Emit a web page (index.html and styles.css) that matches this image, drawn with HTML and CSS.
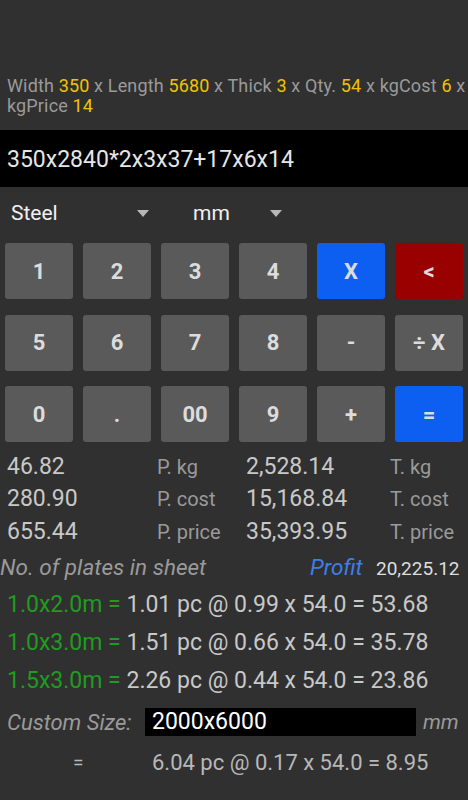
FILE: index.html
```html
<!DOCTYPE html>
<html lang="en">
<head>
    <meta charset="UTF-8">
    <meta name="viewport" content="width=device-width, initial-scale=1.0">
    <title>Plate Calculator</title>
    <link rel="stylesheet" href="styles.css">
</head>
<body>

    <div class="formula">
        Width <span class="val">350</span> x Length <span class="val">5680</span> x Thick <span class="val">3</span> x Qty. <span class="val">54</span> x kgCost <span class="val">6</span> x kgPrice <span class="val">14</span>
    </div>

    <div class="display">350x2840*2x3x37+17x6x14</div>

    <div class="spinners">
        <div class="spinner material">Steel <span class="arrow"></span></div>
        <div class="spinner unit">mm <span class="arrow"></span></div>
    </div>

    <div class="keypad">
        <button class="key">1</button>
        <button class="key">2</button>
        <button class="key">3</button>
        <button class="key">4</button>
        <button class="key blue">X</button>
        <button class="key red">&lt;</button>
        <button class="key">5</button>
        <button class="key">6</button>
        <button class="key">7</button>
        <button class="key">8</button>
        <button class="key">-</button>
        <button class="key">÷ X</button>
        <button class="key">0</button>
        <button class="key">.</button>
        <button class="key">00</button>
        <button class="key">9</button>
        <button class="key">+</button>
        <button class="key blue">=</button>
    </div>

    <div class="results">
        <span class="num">46.82</span><span class="lbl">P. kg</span><span class="num">2,528.14</span><span class="lbl">T. kg</span>
        <span class="num">280.90</span><span class="lbl">P. cost</span><span class="num">15,168.84</span><span class="lbl">T. cost</span>
        <span class="num">655.44</span><span class="lbl">P. price</span><span class="num">35,393.95</span><span class="lbl">T. price</span>
    </div>

    <div class="plates-head">
        <span class="title">No. of plates in sheet</span>
        <span class="profit">Profit</span>
        <span class="profit-val">20,225.12</span>
    </div>

    <div class="plate"><span class="size">1.0x2.0m =</span> 1.01 pc @ 0.99 x 54.0 = 53.68</div>
    <div class="plate"><span class="size">1.0x3.0m =</span> 1.51 pc @ 0.66 x 54.0 = 35.78</div>
    <div class="plate"><span class="size">1.5x3.0m =</span> 2.26 pc @ 0.44 x 54.0 = 23.86</div>

    <div class="custom">
        <span class="custom-lbl">Custom Size:</span>
        <div class="custom-input">2000x6000</div>
        <span class="custom-unit">mm</span>
    </div>

    <div class="custom-result">
        <span class="eq">=</span>
        <span>6.04 pc @ 0.17 x 54.0 = 8.95</span>
    </div>

</body>
</html>
```

FILE: styles.css
```css
body {
    font-family: Roboto, "Noto Sans", sans-serif;
    background-color: #303030;
    color: #c8c8c8;
    margin: 0;
    padding: 0;
    width: 468px;
    height: 800px;
    overflow: hidden;
}
.formula {
    padding: 76px 0 0 7px;
    font-size: 18px;
    letter-spacing: 0.15px;
    line-height: 20px;
    color: #9a9a9a;
    height: 40px;
}
.val {
    color: #f2c200;
}
.display {
    margin-top: 14px;
    height: 57px;
    line-height: 60px;
    background: #000;
    color: #e6e6e6;
    font-size: 23px;
    padding-left: 7px;
    box-sizing: border-box;
}
.spinners {
    display: flex;
    height: 52px;
    align-items: center;
    font-size: 21px;
    color: #f0f0f0;
}
.spinner {
    display: flex;
    align-items: center;
    justify-content: space-between;
}
.material {
    width: 138px;
    padding-left: 11px;
}
.unit {
    width: 89px;
    margin-left: 44px;
}
.arrow {
    width: 0;
    height: 0;
    border-left: 6px solid transparent;
    border-right: 6px solid transparent;
    border-top: 7px solid #b8b8b8;
}
.keypad {
    display: grid;
    grid-template-columns: repeat(6, 68px);
    grid-auto-rows: 56px;
    column-gap: 10px;
    row-gap: 15.5px;
    padding: 4px 5px 0;
}
.key {
    background: #5a5a5b;
    color: #dcdcdc;
    border: none;
    border-radius: 3px;
    font-family: Roboto, sans-serif;
    font-size: 22px;
    font-weight: bold;
    padding: 0;
}
.key.blue {
    background: #0d5ff2;
}
.key.red {
    background: #990000;
}
.results {
    display: grid;
    grid-template-columns: 150px 89px 144px auto;
    align-items: baseline;
    padding: 9px 0 0 7px;
    font-size: 23px;
    line-height: 31px;
    height: 97px;
}
.results .lbl {
    color: #9a9a9a;
    font-size: 20px;
}
.plates-head {
    display: flex;
    align-items: baseline;
    height: 38px;
    line-height: 38px;
}
.title {
    font-style: italic;
    font-size: 22.5px;
    color: #9a9a9a;
    width: 310px;
}
.profit {
    font-style: italic;
    font-size: 22.5px;
    color: #3d7fe6;
    width: 66px;
}
.profit-val {
    font-size: 19px;
    color: #dedede;
}
.plate {
    height: 38px;
    line-height: 38px;
    font-size: 23px;
    padding-left: 7px;
    color: #c8c8c8;
}
.size {
    color: #1f9c1f;
}
.custom {
    display: flex;
    align-items: center;
    height: 44px;
    padding-left: 7px;
}
.custom-lbl {
    font-style: italic;
    font-size: 22px;
    color: #9a9a9a;
    width: 138px;
}
.custom-input {
    background: #000;
    color: #fff;
    font-size: 23px;
    width: 264px;
    height: 28px;
    line-height: 28px;
    padding-left: 7px;
}
.custom-unit {
    font-style: italic;
    font-size: 21px;
    color: #9a9a9a;
    margin-left: 7px;
}
.custom-result {
    display: flex;
    height: 38px;
    line-height: 38px;
    font-size: 22px;
    color: #b8b8b8;
}
.eq {
    width: 79px;
    padding-left: 73px;
    font-size: 19px;
}
```
